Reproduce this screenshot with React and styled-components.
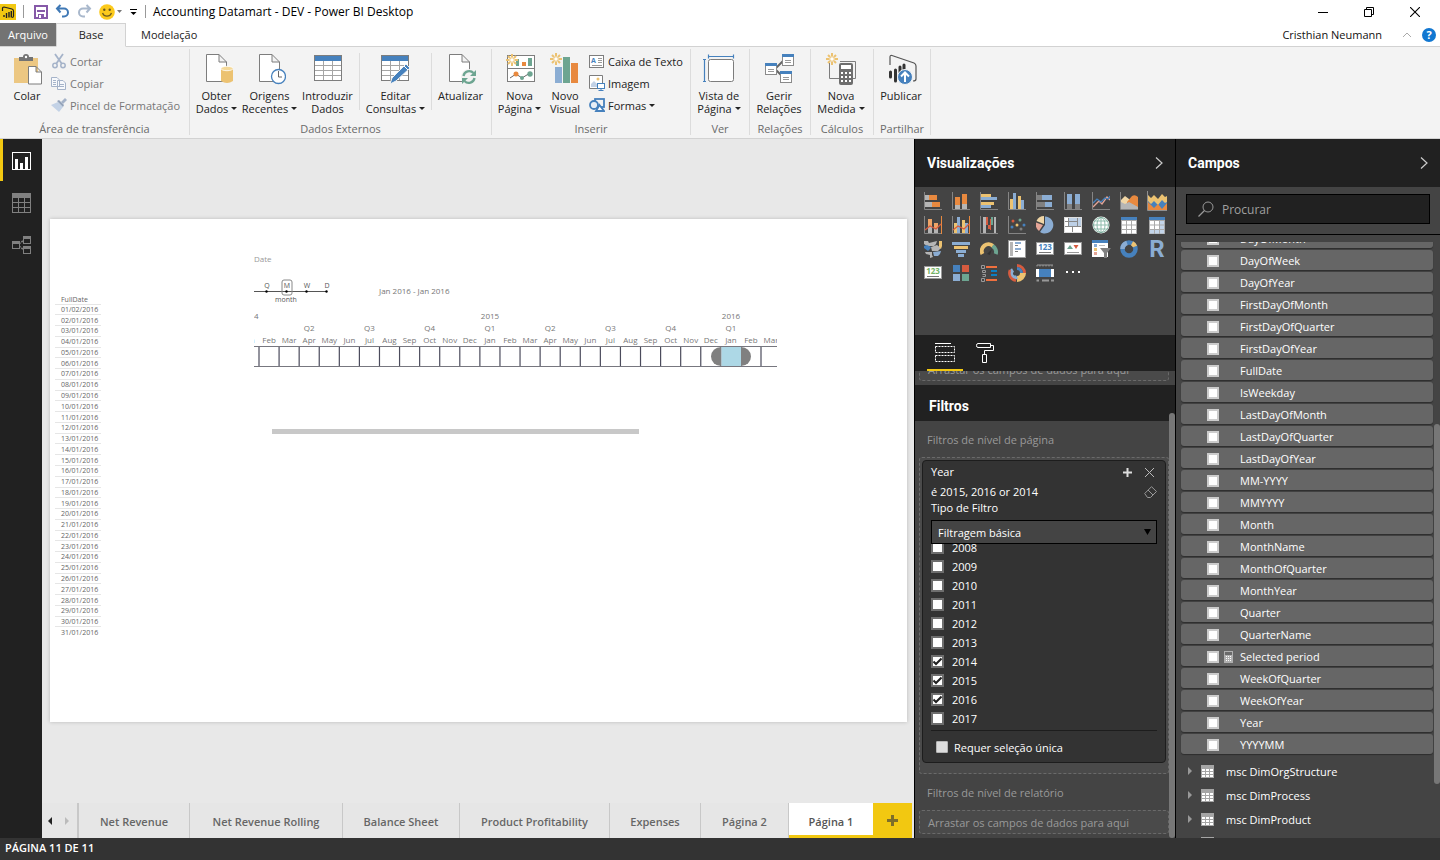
import React from "react";
import styled, { createGlobalStyle, css } from "styled-components";

const GlobalStyle = createGlobalStyle`
  *, *::before, *::after { box-sizing: border-box; }
  body { margin: 0; background: #fff; }
  body, button, input, select {
    font-family: "Open Sans", "Noto Sans", sans-serif;
    font-size: 11px;
  }
  button { border: 0; padding: 0; margin: 0; background: none; color: inherit; cursor: pointer; }
  svg { display: block; flex: none; }
`;

/* ---------- shell ---------- */

const Shell = styled.div`
  display: flex;
  flex-direction: column;
  height: 100vh;
  min-height: 600px;
  overflow: hidden;
`;

const Workspace = styled.div`
  flex: 1;
  min-height: 0;
  display: flex;
  background: #e8e8e8;
`;

const StatusBar = styled.footer`
  flex: none;
  height: 22px;
  padding: 0 5px;
  background: #333;
  color: #fff;
  font-weight: 600;
  line-height: 20px;
`;

/* ---------- title bar and tabs ---------- */

const TitleBar = styled.header`
  flex: none;
  height: 23px;
  display: flex;
  align-items: center;
  background: #fff;
`;

const QuickAccess = styled.div`
  display: flex;
  align-items: center;
  gap: 7px;
`;

const Rule = styled.span`
  width: 1px;
  height: 13px;
  margin-right: 3px;
  background: #999;
`;

const QuickButton = styled.button`
  display: flex;
  align-items: center;
  gap: 2px;
`;

const WindowTitle = styled.h1`
  margin: 0 0 0 4px;
  flex: 1;
  font-size: 12px;
  font-weight: 400;
  line-height: 23px;
  color: #000;
`;

const WindowButtons = styled.div`
  display: flex;
  padding-right: 2px;
  height: 20px;
`;

const WindowButton = styled.button`
  width: 46px;
  display: flex;
  align-items: center;
  justify-content: center;
`;

const TabRow = styled.nav`
  flex: none;
  height: 24px;
  display: flex;
  background: #fff;
  border-bottom: 1px solid #d2d2d2;
`;

const RibbonTab = styled.button`
  height: 24px;
  padding: 0 14px;
  color: #222;
  line-height: 22px;
  border: 1px solid transparent;
  ${(p) => p.$kind === "file" && css`
    width: 56px;
    height: 23px;
    padding: 0;
    background: #737373;
    color: #fff;
    border-color: #737373;
  `}
  ${(p) => p.$kind === "active" && css`
    width: 70px;
    padding: 0;
    background: #f3f3f3;
    border-color: #d2d2d2;
    border-bottom-color: #f3f3f3;
  `}
`;

const Account = styled.div`
  margin-left: auto;
  display: flex;
  align-items: center;
  padding-right: 4px;
  color: #111;
`;

const AccountName = styled.span`
  margin-right: 20px;
`;

const HelpButton = styled.button`
  width: 14px;
  height: 14px;
  margin-left: 10px;
  border-radius: 50%;
  background: #1177d1;
  color: #fff;
  font-weight: 700;
  line-height: 14px;
`;

/* ---------- ribbon ---------- */

const Ribbon = styled.div`
  flex: none;
  height: 92px;
  display: flex;
  padding: 2px 0 3px;
  background: #f3f3f3;
  border-bottom: 1px solid #d2d2d2;
`;

const Group = styled.section`
  display: flex;
  flex-direction: column;
  width: ${(p) => p.$width}px;
  border-right: 1px solid #dcdcdc;
`;

const GroupBody = styled.div`
  flex: 1;
  display: flex;
  justify-content: ${(p) => (p.$start ? "flex-start" : "center")};
  padding: ${(p) => (p.$start ? "4px 0 0 3px" : "4px 2px 0 0")};
`;

const GroupLabel = styled.h2`
  margin: 0;
  text-align: center;
  font-size: 11px;
  font-weight: 400;
  line-height: 13px;
  color: #6a6a6a;
`;

const BigButton = styled.button`
  flex: none;
  width: ${(p) => p.$width}px;
  display: flex;
  flex-direction: column;
  align-items: center;
  justify-content: flex-start;
  line-height: 13px;
  color: #222;
  white-space: nowrap;
  svg.icon { margin-bottom: 4px; }
`;

const LabelLine = styled.span`
  display: flex;
  align-items: center;
  gap: 3px;
`;

const InnerRule = styled.span`
  width: 1px;
  height: 57px;
  background: #dcdcdc;
`;

const SmallStack = styled.div`
  display: flex;
  flex-direction: column;
  padding-left: ${(p) => p.$indent || 0}px;
  margin-top: -3px;
`;

const SmallButton = styled.button`
  height: 22px;
  display: flex;
  align-items: center;
  gap: 3px;
  white-space: nowrap;
  color: ${(p) => (p.$dim ? "#777" : "#222")};
`;

/* ---------- view switcher and canvas ---------- */

const ViewBar = styled.nav`
  flex: none;
  width: 42px;
  background: #212121;
  display: flex;
  flex-direction: column;
`;

const ViewButton = styled.button`
  height: 42px;
  width: 42px;
  display: flex;
  align-items: center;
  justify-content: center;
  padding: 2px 2px 0 0;
  border-left: 3px solid ${(p) => (p.$active ? "#f2c811" : "transparent")};
`;

const Center = styled.main`
  flex: 1;
  min-width: 0;
  display: flex;
  flex-direction: column;
`;

const CanvasArea = styled.div`
  flex: 1;
  min-height: 0;
  display: flex;
  align-items: center;
  padding: 0 7px 2px 8px;
`;

const ReportPage = styled.div`
  position: relative;
  flex: 1;
  aspect-ratio: 857 / 503;
  background: #fff;
  box-shadow: 0 0 4px rgba(0, 0, 0, 0.2);
`;

const DateTable = styled.table`
  position: absolute;
  left: 5px;
  top: 76px;
  width: 46px;
  height: 343px;
  border-collapse: collapse;
  font-size: 7px;
  line-height: 9px;
  color: #666;
  th, td {
    padding: 0 0 0 6px;
    font-weight: 400;
    text-align: left;
    border-bottom: 1px solid #e6e6e6;
    white-space: nowrap;
  }
  tr:last-child td { border-bottom: 0; }
`;

const Timeline = styled.svg`
  position: absolute;
  left: 204px;
  top: 31px;
  font-family: "Open Sans", "Noto Sans", sans-serif;
  font-size: 8px;
`;

const PageTabs = styled.nav`
  flex: none;
  height: 35px;
  display: flex;
  background: #e6e6e6;
  overflow: hidden;
`;

const Pager = styled.div`
  width: 37px;
  display: flex;
  align-items: center;
  justify-content: center;
  gap: 13px;
  padding-right: 2px;
  border-right: 2px solid #c8c8c8;
`;

const PageTab = styled.button`
  flex: none;
  width: ${(p) => p.$width}px;
  padding-top: 2px;
  border-right: 1px solid #c8c8c8;
  color: #666;
  font-weight: 600;
  white-space: nowrap;
  ${(p) => p.$active && css`
    background: #fff;
    border-right: 0;
    border-bottom: 3px solid #f2c811;
    padding-top: 4px;
    color: #555;
  `}
`;

const AddPage = styled.button`
  width: 39px;
  display: flex;
  align-items: center;
  justify-content: center;
  background: #f2c811;
`;

/* ---------- side panels ---------- */

const Panel = styled.aside`
  position: relative;
  flex: none;
  width: ${(p) => p.$width}px;
  display: flex;
  flex-direction: column;
  background: #444;
  border-left: 1px solid #000;
  color: #fff;
  overflow: hidden;
`;

const PanelHeader = styled.div`
  flex: none;
  height: 48px;
  display: flex;
  align-items: center;
  justify-content: space-between;
  padding: 0 12px;
  background: #212121;
`;

const PanelTitle = styled.h2`
  margin: 0;
  font-family: Roboto, sans-serif;
  font-size: 14px;
  font-weight: 700;
  line-height: 36px;
`;

const VisualGrid = styled.div`
  flex: none;
  height: 148px;
  display: grid;
  grid-template-columns: repeat(9, 28px);
  grid-auto-rows: 24px;
  padding: 2px 0 0 4px;
`;

const VisualButton = styled.button`
  display: flex;
  align-items: center;
  justify-content: center;
`;

const PaneTabs = styled.div`
  flex: none;
  height: 36px;
  display: flex;
  gap: 4px;
  padding-left: 12px;
  background: #212121;
`;

const PaneTab = styled.button`
  width: 36px;
  display: flex;
  align-items: center;
  justify-content: center;
  padding-top: 2px;
  border-bottom: 2px solid ${(p) => (p.$active ? "#f2c811" : "transparent")};
`;

const ClippedWell = styled.div`
  flex: none;
  height: 14px;
  display: flex;
  align-items: flex-end;
  overflow: hidden;
  padding: 0 6px 4px 4px;
`;

const DropWell = styled.div`
  flex: 1;
  height: 24px;
  padding: 1px 0 0 8px;
  border: 1px dashed #6a6a6a;
  border-radius: 3px;
  background: #4a4a4a;
  color: #999;
  line-height: 22px;
  white-space: nowrap;
`;

const FilterHeader = styled.div`
  flex: none;
  height: 36px;
  padding: 3px 14px 0;
  background: #212121;
`;

const FilterBody = styled.div`
  flex: 1;
  min-height: 0;
  padding: 0 6px 0 4px;
  overflow: hidden;
`;

const Caption = styled.p`
  margin: 0;
  padding: 2px 0 0 8px;
  line-height: 34px;
  color: #999;
`;

const FilterWell = styled.div`
  height: 317px;
  padding: 2px;
  border: 1px dashed #6a6a6a;
  border-radius: 3px;
  background: #4a4a4a;
`;

const FilterCard = styled.div`
  height: 303px;
  padding: 3px 8px 0;
  border: 1px solid #1d1d1d;
  border-radius: 4px;
  background: #333;
`;

const CardRow = styled.div`
  display: flex;
  align-items: center;
  height: 16px;
  margin-bottom: ${(p) => p.$gap || 0}px;
  line-height: 16px;
`;

const CardActions = styled.span`
  margin-left: auto;
  display: flex;
  align-items: center;
  gap: 13px;
  padding-right: ${(p) => p.$end}px;
`;

const SelectWrap = styled.div`
  display: grid;
  align-items: center;
  margin-top: 4px;
  > * { grid-area: 1 / 1; }
  svg { justify-self: end; margin-right: 6px; pointer-events: none; }
`;

const Select = styled.select`
  appearance: none;
  width: 100%;
  height: 24px;
  padding: 1px 6px 0;
  border: 1px solid #000;
  border-radius: 0;
  background: #444;
  color: #fff;
`;

const YearList = styled.div`
  height: 187px;
  display: flex;
  flex-direction: column;
  justify-content: flex-end;
  overflow: hidden;
  padding-bottom: 2px;
  border-bottom: 1px solid #1d1d1d;
`;

const YearRow = styled.label`
  flex: none;
  height: 19px;
  display: flex;
  align-items: center;
  gap: 8px;
`;

const Check = styled.input`
  appearance: none;
  flex: none;
  width: ${(p) => p.$size}px;
  height: ${(p) => p.$size}px;
  margin: 0;
  border: 2px solid ${(p) => p.$edge};
  background: #fff;
  &:checked {
    background: #fff url("data:image/svg+xml,%3Csvg xmlns='http://www.w3.org/2000/svg' viewBox='0 0 9 9'%3E%3Cpath d='M0.5 4.5L3 7L8.500 1.500' fill='none' stroke='%23222' stroke-width='2'/%3E%3C/svg%3E") center / 9px 9px no-repeat;
  }
`;

const SingleRow = styled.label`
  height: 32px;
  display: flex;
  align-items: center;
  gap: 6px;
  padding-left: 5px;
`;

const SingleCheck = styled.input`
  appearance: none;
  width: 12px;
  height: 12px;
  margin: 0;
  border: 1px solid #b5b5b5;
  border-radius: 1px;
  background: #ddd;
`;

const ScrollThumb = styled.span`
  position: absolute;
  right: 0;
  top: ${(p) => p.$top}px;
  width: 6px;
  height: ${(p) => p.$height}px;
  border-radius: 3px;
  background: #777;
`;

const SearchArea = styled.div`
  flex: none;
  height: 48px;
  padding: 7px 10px 0;
  border-bottom: 1px solid #000;
`;

const SearchBox = styled.label`
  height: 30px;
  display: flex;
  align-items: center;
  gap: 8px;
  padding-left: 11px;
  border: 1px solid #000;
  background: #212121;
`;

const SearchInput = styled.input`
  flex: 1;
  min-width: 0;
  border: 0;
  padding: 0;
  outline: 0;
  background: transparent;
  color: #fff;
  font-size: 12px;
  &::placeholder { color: #a0a0a0; opacity: 1; }
`;

const FieldScroller = styled.div`
  flex: 1;
  min-height: 0;
  margin-top: 7px;
  overflow: hidden;
`;

const FieldList = styled.div`
  margin: -14px 7px 0 5px;
  padding-bottom: 3px;
`;

const FieldRow = styled.label`
  height: 20px;
  margin-bottom: 2px;
  display: flex;
  align-items: center;
  padding: 1px 0 0 26px;
  border-radius: 3px;
  background: #666;
  box-shadow: 0 1px 1px #2e2e2e;
`;

const FieldGlyph = styled.span`
  width: 21px;
  display: flex;
  padding-left: 5px;
`;

const TableRow = styled.button`
  width: 100%;
  height: 24px;
  display: flex;
  align-items: center;
  padding-left: 12px;
  text-align: left;
`;

const TableName = styled.span`
  margin-left: 12px;
`;

/* ---------- icons ---------- */

const C = { or: "#e8893f", gr: "#b5b5b5", dk: "#808080", ye: "#ecc271", bl: "#8badd3", db: "#4681bd", pk: "#e5a597", te: "#6da591", rd: "#d65b3f" };

const Rects = ({ items }) =>
  items.map(([x, y, w, h, f], i) => <rect key={i} x={x} y={y} width={w} height={h} fill={f} />);

const Caret = ({ w = 6, h = 3, fill = "#222" }) => (
  <svg width={w} height={h} viewBox={`0 0 ${w} ${h}`}><path d={`M0 0h${w}L${w / 2} ${h}z`} fill={fill} /></svg>
);

const Chevron = () => (
  <svg width="8" height="12" viewBox="0 0 8 12"><path d="M1 .5L7 6L1 11.500" fill="none" stroke="#ccc" strokeWidth="1.200" /></svg>
);

const Svg = ({ s = 18, children, ...rest }) => (
  <svg width={s} height={s} viewBox={`0 0 ${s} ${s}`} {...rest}>{children}</svg>
);

const Axis = () => <path d="M.5 0V17.5H18" fill="none" stroke="#858585" />;

const bars = (items) => <Svg><Rects items={items} /><Axis /></Svg>;

const wave = (y, f) => <path d={`M1 ${y}L4 ${y + 3}L7 ${y}L11 ${y + 4}L15 ${y - 1}L18 ${y + 2}L20 ${y + 1}V19H1z`} fill={f} />;

const VISUALS = [
  ["Barras empilhadas", bars([[1, 3, 4, 5, C.gr], [5, 3, 8, 5, C.or], [1, 10, 7, 5, C.gr], [8, 10, 8, 5, C.or]])],
  ["Colunas empilhadas", bars([[3, 5, 5, 8, C.or], [3, 13, 5, 4, C.gr], [10, 2, 5, 10, C.or], [10, 12, 5, 5, C.gr]])],
  ["Barras agrupadas", bars([[1, 2, 10, 3, C.ye], [1, 5, 16, 3, C.bl], [1, 10, 13, 3, C.ye], [1, 13, 10, 3, C.bl]])],
  ["Colunas agrupadas", bars([[2, 7, 3, 10, C.ye], [5, 1, 3, 16, C.bl], [10, 4, 3, 13, C.ye], [13, 8, 3, 9, C.bl]])],
  ["Barras 100%", bars([[1, 3, 5, 5, C.dk], [6, 3, 10, 5, C.bl], [1, 10, 8, 5, C.dk], [9, 10, 7, 5, C.bl]])],
  ["Colunas 100%", bars([[3, 2, 5, 10, C.bl], [3, 12, 5, 5, C.dk], [11, 2, 5, 10, C.bl], [11, 12, 5, 5, C.dk]])],
  ["Linhas", <Svg><path d="M1 15L7 9L10 12L15 5L18 8" fill="none" stroke={C.pk} strokeWidth="1.300" /><path d="M1 11L5 7L9 10L13 6L16 7L18 4" fill="none" stroke={C.db} strokeWidth="1.300" /><Axis /></Svg>],
  ["Área", <Svg><path d="M1 17V8L5 4L9 7L12 9V17z" fill="#f0d6a6" /><path d="M7 10L12 4Q15 2 18 5V17H7z" fill={C.or} /><path d="M1 10L5 12L9 10L18 15V17H1z" fill={C.gr} /><Axis /></Svg>],
  ["Área empilhada", <Svg s={20}>{wave(4, C.ye)}{wave(10, C.db)}<path d="M1 11L4 14L7 17L11 13L15 18L20 12V19H1z" fill={C.or} /><path d="M.5 0V19.5H20" fill="none" stroke="#909090" /></Svg>],
  ["Linhas e colunas empilhadas", <Svg><Rects items={[[4, 3, 4, 8, "#eea467"], [4, 11, 4, 6, C.gr], [10, 7, 4, 5, "#eea467"], [10, 12, 4, 5, C.gr], [17, 0, 1, 18, C.or]]} /><path d="M1 14L6 10L12 13L17 8" fill="none" stroke={C.rd} strokeWidth="1.300" /><path d="M.5 0V17.5H17" fill="none" stroke="#858585" /></Svg>],
  ["Linhas e colunas agrupadas", <Svg><Rects items={[[2, 7, 3, 10, C.ye], [5, 1, 3, 16, C.bl], [10, 4, 3, 13, C.ye], [13, 7, 3, 10, C.bl], [17, 0, 1, 18, C.or]]} /><path d="M1 14L6 10L12 13L17 8" fill="none" stroke={C.rd} strokeWidth="1.300" /><path d="M.5 0V17.500H17" fill="none" stroke="#858585" /></Svg>],
  ["Cascata", bars([[3, 1, 3, 16, C.gr], [6, 1, 2, 8, C.rd], [8, 9, 2, 4, C.rd], [10, 3, 1, 11, C.rd], [11, 1, 2, 8, C.te], [14, 1, 2, 16, C.gr]])],
  ["Dispersão", <Svg><circle cx="5" cy="5" r="1.500" fill={C.rd} /><circle cx="12" cy="4" r="1.500" fill={C.te} /><circle cx="9" cy="9" r="1.500" fill={C.ye} /><circle cx="4" cy="11" r="1.500" fill={C.db} /><circle cx="16" cy="9" r="1.500" fill={C.db} /><circle cx="13" cy="13" r="1.500" fill={C.dk} /><Axis /></Svg>],
  ["Circular", <Svg><path d="M9 9V.5A8.500 8.500 0 1 1 4 16z" fill={C.bl} /><path d="M8 8V0A8.500 8.500 0 0 0 .5 5z" fill="#f0d6a6" /><path d="M7 9L0 6.500A8.500 8.500 0 0 0 3 15z" fill={C.pk} /></Svg>],
  ["Treemap", <Svg><Rects items={[[0, 1, 18, 16, "#fff"], [5, 2, 8, 8, "#bdd0e6"], [14, 2, 3, 8, "#bdd0e6"], [4, 1, 1, 10, "#888"], [13, 1, 1, 9, "#888"], [0, 5, 13, 1, "#888"], [0, 10, 18, 1, "#888"], [8, 10, 1, 7, "#888"]]} /><rect x=".5" y="1.500" width="17" height="15" fill="none" stroke="#ddd" /></Svg>],
  ["Mapa", <Svg><circle cx="9" cy="9" r="8.500" fill="#fff" /><path d="M9 1V17M1 9H17M2.500 5H15.500M2.500 13H15.500" stroke="#8fbcad" fill="none" /><ellipse cx="9" cy="9" rx="4" ry="7.500" fill="none" stroke="#8fbcad" /><circle cx="9" cy="9" r="7.500" fill="none" stroke={C.te} strokeWidth=".8" /></Svg>],
  ["Tabela", <Svg><rect x="1" y="1" width="16" height="17" fill="#aaa" /><rect x="1" y="1" width="16" height="3" fill={C.db} /><Rects items={[5, 9.5, 14].flatMap((y) => [2, 7, 12].map((x) => [x, y, 4, 3.5, "#fff"]))} /></Svg>],
  ["Matriz", <Svg><rect x="1" y="1" width="16" height="17" fill="#aaa" /><rect x="1" y="1" width="16" height="3" fill={C.db} /><Rects items={[5, 9.5, 14].flatMap((y) => [2, 7, 12].map((x) => [x, y, 4, 3.5, x === 12 || y === 14 ? "#c3d5ea" : "#fff"]))} /></Svg>],
  ["Mapa de manchas", <Svg><path d="M0 1H4L5 3L9 2L13 1L12 4L10 6H3L0 4z" fill={C.gr} /><path d="M0 6L3 5L7 7L6 9L4 11L0 8z" fill={C.db} /><path d="M7 7L13 5L17 8L14 11H8z" fill={C.gr} /><path d="M15 1H18V6L17 9L15 7z" fill={C.ye} /><path d="M9 12L17 11L16 14L14 16H10z" fill={C.bl} /><path d="M1 12H8V15L9 17L6 18V15L2 14z" fill={C.gr} /></Svg>],
  ["Funil", <Svg><Rects items={[[0, 2, 18, 3, C.bl], [2, 6, 14, 3, C.ye], [4, 10, 10, 3, C.bl], [6, 14, 6, 3, C.bl]]} /></Svg>],
  ["Medidor", <Svg><path d="M2.500 14A6.700 6.700 0 0 1 13 6" fill="none" stroke={C.ye} strokeWidth="4" /><path d="M12.500 6A6.700 6.700 0 0 1 15.700 14" fill="none" stroke={C.te} strokeWidth="4" /><path d="M7 14L12 9L10 15z" fill="#333" /></Svg>],
  ["Cartão de várias linhas", <Svg><rect x=".5" y=".5" width="17" height="17" fill="#fff" stroke="#999" /><Rects items={[[2, 2, 3, 14, C.gr], [7, 2, 6, 2, C.bl], [7, 5, 3, 1, C.dk], [7, 8, 6, 2, C.bl], [7, 11, 3, 1, C.dk]]} /></Svg>],
  ["Cartão", <Svg><rect x=".5" y="2.500" width="17" height="12" fill="#fff" stroke="#999" /><text x="9" y="10" textAnchor="middle" fontSize="8" fontWeight="700" fill={C.db}>123</text><rect x="3" y="12" width="12" height="1" fill="#777" /></Svg>],
  ["KPI", <Svg><rect x=".5" y="2.500" width="17" height="12" fill="#fff" stroke="#999" /><path d="M3 9L6 5L9 9z" fill={C.te} /><path d="M9.500 5H14.500L12 9z" fill={C.rd} /><rect x="3" y="12" width="12" height="1" fill="#999" /></Svg>],
  ["Segmentação", <Svg s={20}><Rects items={[[1, 1, 16, 17, "#fff"], [1, 1, 16, 3, C.db], [3, 5, 3, 3, C.bl], [3, 9, 3, 3, C.ye], [3, 13, 3, 3, C.pk], [8, 6, 6, 1, "#bbb"]]} /><path d="M9 9H20L16 14V19H13V14z" fill="#808080" /></Svg>],
  ["Anel", <Svg><circle cx="9" cy="9" r="6.500" fill="none" stroke={C.db} strokeWidth="4.500" /><path d="M12 3.200A6.500 6.500 0 0 1 15 6.500" fill="none" stroke={C.ye} strokeWidth="4.500" /><path d="M2.500 9A6.500 6.500 0 0 1 7 3" fill="none" stroke={C.bl} strokeWidth="4.500" /></Svg>],
  ["Script R", <Svg><text x="9" y="17" textAnchor="middle" fontFamily="Roboto" fontSize="24" fontWeight="700" fill={C.bl}>R</text></Svg>],
  ["Cartão personalizado", <Svg><rect x=".5" y="2.500" width="17" height="12" fill="#fff" stroke="#999" /><text x="9" y="10" textAnchor="middle" fontSize="8" fontWeight="700" fill="#74b266">123</text><rect x="3" y="12" width="12" height="1" fill="#777" /></Svg>],
  ["Mosaico", <Svg><Rects items={[[1, 1, 7, 7, C.db], [10, 1, 7, 7, C.rd], [1, 10, 7, 7, C.bl], [10, 10, 7, 7, C.te]]} /></Svg>],
  ["Segmentação hierárquica", <Svg><path d="M1.500 1.500h3v3h-3zM2.500 6.500h3v2h-3zM2.500 10.500h3v2h-3M1.500 14.500h3v3h-3z" fill="none" stroke="#999" /><Rects items={[[6, 2, 11, 2, "#f0703e"], [11, 6, 6, 2, "#0d7fc2"], [11, 10, 6, 2, "#0d7fc2"], [6, 15, 11, 2, "#f0703e"]]} /></Svg>],
  ["Radial", <Svg><path d="M9 1.500A7.500 7.500 0 0 1 16.500 9" fill="none" stroke={C.rd} strokeWidth="3" /><path d="M9 4.500A4.500 4.500 0 0 1 13.500 9" fill="none" stroke={C.db} strokeWidth="3" /><path d="M15 9A6 6 0 0 1 9 15" fill="none" stroke={C.ye} strokeWidth="6" /><path d="M9 13A4 4 0 0 1 5 6" fill="none" stroke={C.bl} strokeWidth="4" /><path d="M8 16.500A7.500 7.500 0 0 1 2 6" fill="none" stroke={C.rd} strokeWidth="2.500" /></Svg>],
  ["Linha cronológica", <Svg><path d="M1 1V2.500M4 1V2.500M7 1V2.500M10 1V2.500M13 1V2.500M16 1V2.500M1 1H17" stroke="#999" /><path d="M.5 16.500H3M6 16.500H13M15 16.500H18" stroke="#999" strokeWidth="2" /><Rects items={[[0, 5, 18, 8, "#fff"], [3, 5, 12, 8, C.db]]} /></Svg>],
  ["Mais opções", <Svg><Rects items={[[2, 7, 2, 2, "#fff"], [8, 7, 2, 2, "#fff"], [14, 7, 2, 2, "#fff"]]} /></Svg>],
];

const Doc = () => <path d="M5.500 1.500H18L25.500 9V28.500H5.500zM18 1.500V9H25.500" fill="#fff" stroke="#7d7d7d" />;

const GridPaper = ({ x = 2 }) => (
  <g>
    <rect x={x + 0.5} y="2.500" width="27" height="25" fill="#fff" stroke="#7d7d7d" />
    <rect x={x + 1} y="3" width="26" height="5" fill="#4681bd" />
    <path d={`M${x + 9.5} 8V27M${x + 18.5} 8V27M${x + 1} 12.500H${x + 27}M${x + 1} 17.500H${x + 27}M${x + 1} 22.500H${x + 27}`} stroke="#a5a5a5" fill="none" />
  </g>
);

const Spark = ({ x, y }) => (
  <g transform={`translate(${x} ${y})`} stroke="#ecc271" fill="none">
    <path d="M0-6V-3M0 3V6M-6 0H-3M3 0H6M-4-4L-2-2M2 2L4 4M4-4L2-2M-2 2L-4 4" strokeWidth="2" />
    <circle r="2.300" fill="#fff" />
  </g>
);

const Big = ({ children }) => <svg className="icon" width="32" height="32" viewBox="0 0 32 32">{children}</svg>;

const PasteIcon = () => (
  <Big>
    <rect x="3" y="5" width="24" height="25" fill="#ecc782" />
    <path d="M8 8V4H12A3 3 0 0 1 18 4H22V8z" fill="#737373" /><circle cx="15" cy="4" r="1.200" fill="#fff" />
    <path d="M17.500 13.500H25L30.500 19V31H17.500zM25 13.500V19H30.500" fill="#fff" stroke="#7d7d7d" />
  </Big>
);
const GetDataIcon = () => (
  <Big><Doc /><path d="M20 15V28Q26 32 32 28V15z" fill="#ecc271" /><ellipse cx="26" cy="15.500" rx="6" ry="2.200" fill="#f5d998" stroke="#fff" strokeWidth=".8" /></Big>
);
const RecentIcon = () => (
  <Big><Doc /><circle cx="24.500" cy="23.500" r="7" fill="#fff" stroke="#4681bd" strokeWidth="1.300" /><path d="M24.500 18V24H28" fill="none" stroke="#666" /></Big>
);
const EnterIcon = () => <Big><GridPaper /></Big>;
const EditIcon = () => (
  <Big><GridPaper x={1} /><path d="M10 31L12 25L26 11L30 15L16 28z" fill="#4681bd" stroke="#f3f3f3" /><path d="M24 13L28 17" stroke="#fff" /></Big>
);
const RefreshIcon = () => (
  <Big>
    <path d="M4.500 1.500H17L24.500 9V28.500H4.500zM17 1.500V9H24.500" fill="#fff" stroke="#7d7d7d" />
    <circle cx="24" cy="24" r="8" fill="#f3f3f3" />
    <path d="M18.500 23A5.800 5.800 0 0 1 28.500 20M29.500 25A5.800 5.800 0 0 1 19.500 28" fill="none" stroke="#6da591" strokeWidth="2.300" />
    <path d="M31 17V23H25zM17 31V25H23z" fill="#6da591" />
  </Big>
);
const NewPageIcon = () => (
  <Big>
    <rect x="3.500" y="2.500" width="27" height="26" fill="#fff" stroke="#7d7d7d" /><path d="M4 15.500H30" stroke="#7d7d7d" />
    <Rects items={[[12, 6, 3, 7, "#6da591"], [18, 9, 4, 4, "#e8893f"], [24, 5, 4, 8, "#6da591"]]} />
    <path d="M6 25L12 21L18 25L26 20" fill="none" stroke="#666" /><circle cx="12" cy="21" r="2.500" fill="#e8893f" /><circle cx="18" cy="25" r="2" fill="#6da591" /><circle cx="26" cy="21" r="2.700" fill="#6da591" />
    <Spark x={8} y={7} />
  </Big>
);
const NewVisualIcon = () => (
  <Big><Rects items={[[6, 14, 7, 16, "#8badd3"], [14, 4, 7, 26, "#6da591"], [22, 10, 7, 20, "#e8893f"]]} /><Spark x={7} y={6} /></Big>
);
const PageViewIcon = () => (
  <Big><rect x="5.500" y="6.500" width="25" height="22" rx="2" fill="#fff" stroke="#7d7d7d" /><path d="M5 3.500H31M5.500 1.500V5.500M30.500 1.500V5.500M1.500 6V29M0 6.500H3M0 28.500H3" fill="none" stroke="#4681bd" strokeWidth="1.200" /></Big>
);
const MiniCard = ({ x, y, w = 11 }) => (
  <g><rect x={x + 0.5} y={y + 0.5} width={w} height="11" fill="#fff" stroke="#8a8a8a" /><rect x={x} y={y} width={w + 1} height="3" fill="#4681bd" /><path d={`M${x + 3} ${y + 6.5}h6M${x + 3} ${y + 8.5}h6`} stroke="#999" /></g>
);
const RelationsIcon = () => (
  <Big><path d="M12 16L20 8M12 16L20 24" stroke="#666" strokeWidth="2" /><MiniCard x={2} y={10} /><MiniCard x={19} y={1} /><MiniCard x={17} y={18} /></Big>
);
const MeasureIcon = () => (
  <Big>
    <path d="M4.500 10V25.500H14M15 8.500H30.500V25.500H28" fill="none" stroke="#7d7d7d" />
    <rect x="14" y="10" width="14" height="22" rx="2" fill="#6e6e6e" /><rect x="16" y="12" width="10" height="4" fill="#fff" />
    <Rects items={[19, 23, 27].flatMap((y) => [16, 20, 24].map((x) => [x, y, 2, 2, "#fff"]))} />
    <Spark x={7} y={6} />
  </Big>
);
const PublishIcon = () => (
  <Big>
    <path d="M5 10V4Q5 2 7 2.500L29 10Q31 11 31 13V26Q31 28 28 28M5 10V12" fill="none" stroke="#555" strokeWidth="1.200" />
    <path d="M5.500 19V24M10.500 17V28M15 14V22M19 12V18" stroke="#333" strokeWidth="3" strokeLinecap="round" />
    <circle cx="20" cy="24" r="7.500" fill="#4681bd" stroke="#f3f3f3" /><path d="M20 29V20M16 23.500L20 19.500L24 23.500" fill="none" stroke="#fff" strokeWidth="2" />
  </Big>
);

const CutIcon = () => (
  <Svg s={16}><path d="M4 1L11 11M12 1L5 11" stroke="#a5b3c9" strokeWidth="1.800" /><circle cx="4" cy="12.500" r="2.200" fill="none" stroke="#a5b3c9" strokeWidth="1.500" /><circle cx="12" cy="12.500" r="2.200" fill="none" stroke="#a5b3c9" strokeWidth="1.500" /></Svg>
);
const CopyIcon = () => (
  <Svg s={16}><path d="M.5 2.500H6L8.500 5V11.500H.5zM6.500 5.500H12L14.500 8V14.500H6.500z" fill="#f7f9fc" stroke="#a5b3c9" /><path d="M2 5.500H5M2 7.500H5M2 9.500H5M8 9.500H13M8 11.500H13" stroke="#a5b3c9" /></Svg>
);
const BrushIcon = () => (
  <Svg s={16}><path d="M0 8L7 5L12 10L8 15z" fill="#c3d2e6" /><path d="M6 4L8 3L13 8L12 10z" fill="#94a3ba" /><path d="M10 5L14 1L16 3L12 7z" fill="#a5b3c9" /></Svg>
);
const TextBoxIcon = () => (
  <Svg s={16}><rect x=".5" y="2.500" width="14" height="12" fill="#fff" stroke="#7d7d7d" /><text x="2" y="10" fontSize="7" fontWeight="700" fill="#4681bd">A</text><path d="M9 5.500H13M9 7.500H13M9 9.500H13M3 12.500H13" stroke="#999" /></Svg>
);
const ImageIcon = () => (
  <Svg s={16}><path d="M.5.500H13.500V13.500H.5z" fill="#fff" stroke="#7d7d7d" /><circle cx="9" cy="4" r="1.500" fill="#ecc271" /><path d="M2 12V9L5 6L8 9V12z" fill="#c3d2e6" /><rect x="8.500" y="8.500" width="7" height="5" fill="#fff" stroke="#4681bd" /><path d="M12 13V15M9.500 15.500H14.500" stroke="#4681bd" /></Svg>
);
const ShapesIcon = () => (
  <Svg s={16}><rect x="6" y="2" width="9" height="8" fill="none" stroke="#4681bd" strokeWidth="1.800" /><circle cx="5" cy="8" r="4" fill="#e7eef6" stroke="#4681bd" strokeWidth="1.800" /><path d="M10.500 8L15 14H7z" fill="#fff" stroke="#4681bd" strokeWidth="1.800" /></Svg>
);

const LogoIcon = () => (
  <Svg s={16}><rect width="16" height="16" fill="#f2c811" /><path d="M2.500 7V4Q2.500 3 4 3L12 5Q13.500 5.500 13.500 7V12Q13.500 13.500 12 13.500" fill="none" stroke="#222" strokeWidth="1.200" /><path d="M4 11V13M6.500 9V14M9 8V13.500M11.300 7V13.500" stroke="#222" strokeWidth="1.400" /></Svg>
);
const SaveIcon = () => (
  <Svg s={14}><path d="M1 1H13V13H1z" fill="#fff" stroke="#8659a8" strokeWidth="2" /><path d="M3 6H11" stroke="#8659a8" strokeWidth="2" /><path d="M4 9H10V13H4z" fill="#8659a8" /><rect x="5" y="10" width="2" height="3" fill="#fff" /></Svg>
);
const ArrowIcon = ({ flip, color }) => (
  <Svg s={15}><path transform={flip ? "matrix(-1 0 0 1 15 0)" : undefined} d="M5.500 1L2 4.500L5.500 8.500M2 4.500H9A4 4 0 0 1 9 12.500H7" fill="none" stroke={color} strokeWidth="2" /></Svg>
);
const SmileIcon = () => (
  <Svg s={16}><circle cx="8" cy="8" r="7.800" fill="#fcca1c" /><circle cx="5.300" cy="5.800" r="1.200" fill="#6b5a1e" /><circle cx="10.700" cy="5.800" r="1.200" fill="#6b5a1e" /><path d="M3.500 9A4.800 4.800 0 0 0 12.500 9" fill="none" stroke="#6b5a1e" strokeWidth="1.200" /></Svg>
);

const ReportIcon = () => (
  <svg width="19" height="18" viewBox="0 0 19 18"><rect x=".5" y=".5" width="18" height="17" fill="none" stroke="#fff" /><Rects items={[[3, 7, 3, 10, "#fff"], [8, 11, 3, 6, "#fff"], [13, 5, 3, 12, "#fff"]]} /></svg>
);
const DataIcon = () => (
  <svg width="19" height="20" viewBox="0 0 19 20"><rect width="19" height="20" fill="#808080" /><Rects items={[5, 10, 15].flatMap((y) => [1, 7, 13].map((x) => [x, y, 5, 4, "#212121"]))} /></svg>
);
const ModelIcon = () => (
  <svg width="19" height="18" viewBox="0 0 19 18"><path d="M7 8L12 4M7 10L12 14" stroke="#808080" strokeWidth="1.500" strokeDasharray="2 1" /><g fill="#212121" stroke="#808080"><rect x=".5" y="5.500" width="7" height="7" /><rect x="11.500" y=".5" width="7" height="7" /><rect x="11.500" y="10.500" width="7" height="7" /></g><Rects items={[[0, 5, 8, 3, "#808080"], [11, 0, 8, 3, "#808080"], [11, 10, 8, 3, "#808080"]]} /></svg>
);

const FieldsTabIcon = () => (
  <Svg s={20}><path d="M0 .5H16" stroke="#fff" /><path d="M.5 3.500H19.500V9.500H.5zM.5 12.500H19.500V18.500H.5z" fill="none" stroke="#fff" strokeDasharray="2 1" /></Svg>
);
const RollerIcon = () => (
  <Svg s={20}><path d="M3 .5H15.500V4.500H3Q1.500 4.500 1.500 2.500Q1.500 .500 3 .500zM15.500 2.500H18.500V7.500H9.500V11M7.500 11.500H11.500V19.500H7.500z" fill="none" stroke="#fff" /></Svg>
);
const TableGlyph = () => (
  <Svg s={13}><rect width="13" height="13" fill="#a5a5a5" /><Rects items={[4, 7, 10].flatMap((y) => [1, 5, 9].map((x) => [x, y, 3, 2, "#fff"]))} /></Svg>
);
const CalcGlyph = () => (
  <svg width="9" height="12" viewBox="0 0 9 12"><rect width="9" height="12" fill="#b0b0b0" /><rect x="1" y="1" width="7" height="3" fill="#6a6a6a" /><Rects items={[5, 7, 9].flatMap((y) => [2, 4, 6].map((x) => [x, y, 1, 1, "#fff"]))} /></svg>
);

/* ---------- data ---------- */

const DATES = ["01/02/2016", ...Array.from({ length: 30 }, (_, i) => `${String(i + 2).padStart(2, "0")}/01/2016`)];
const MONTHS = ["Jan", "Feb", "Mar", "Apr", "May", "Jun", "Jul", "Aug", "Sep", "Oct", "Nov", "Dec"];
const FIELDS = ["DayOfMonth", "DayOfWeek", "DayOfYear", "FirstDayOfMonth", "FirstDayOfQuarter", "FirstDayOfYear", "FullDate", "IsWeekday", "LastDayOfMonth", "LastDayOfQuarter", "LastDayOfYear", "MM-YYYY", "MMYYYY", "Month", "MonthName", "MonthOfQuarter", "MonthYear", "Quarter", "QuarterName", "Selected period", "WeekOfQuarter", "WeekOfYear", "Year", "YYYYMM"];
const TABLES = ["msc DimOrgStructure", "msc DimProcess", "msc DimProduct", "msc DimProject"];
const PAGES = [["Net Revenue", 111], ["Net Revenue Rolling", 153], ["Balance Sheet", 117], ["Product Profitability", 150], ["Expenses", 91], ["Página 2", 88], ["Página 1", 84]];
const YEARS = [2008, 2009, 2010, 2011, 2012, 2013, 2014, 2015, 2016, 2017];

/* ---------- composed parts ---------- */

const Action = ({ width, icon, lines, caret }) => (
  <BigButton $width={width}>
    {icon}
    {lines.map((line, i) => (
      <LabelLine key={line}>{line}{caret && i === lines.length - 1 && <Caret />}</LabelLine>
    ))}
  </BigButton>
);

const STEP = 20.08;

const TimelineVisual = () => {
  const first = 5 - STEP;
  const months = Array.from({ length: 27 }, (_, i) => ({ x: first + i * STEP, m: i % 12 }));
  return (
    <Timeline width="523" height="190" viewBox="0 0 523 190" fill="#777">
      <text x="0" y="12" fill="#999">Date</text>
      <path d="M0 41.500H73" stroke="#555" />
      {["Q", "M", "W", "D"].map((t, i) => (
        <g key={t}>
          <text x={13 + i * 20} y="38" fontSize="7" textAnchor="middle" fill="#555">{t}</text>
          <circle cx={12.500 + i * 20} cy="41.500" r="1.200" fill="#000" />
        </g>
      ))}
      <rect x="28" y="30" width="10" height="15" rx="2" fill="none" stroke="#888" />
      <text x="32" y="52" fontSize="7" textAnchor="middle" fill="#555">month</text>
      <text x="125" y="44">Jan 2016 - Jan 2016</text>
      <text x="0" y="69">4</text>
      <text x="236" y="69" textAnchor="middle">2015</text>
      <text x="477" y="69" textAnchor="middle">2016</text>
      {months.map(({ x, m }, i) => (
        <g key={i}>
          {m % 3 === 0 && i > 0 && <text x={x + STEP / 2} y="81" textAnchor="middle">{`Q${m / 3 + 1}`}</text>}
          <text x={x + STEP / 2} y="93" textAnchor="middle">{MONTHS[m]}</text>
          <path d={`M${x} 96.500V116.500`} stroke="#4b4b5c" strokeWidth="1.200" />
        </g>
      ))}
      <path d="M0 96.500H523M0 116.500H523" stroke="#77777f" />
      <path d="M467 97A10 9.500 0 0 0 467 116z" fill="#808080" />
      <path d="M487 97A10 9.500 0 0 1 487 116z" fill="#808080" />
      <rect x="467.500" y="97" width="19.500" height="19" fill="#add8e6" />
      <rect x="18" y="179" width="367" height="5" fill="#c8c8c8" />
    </Timeline>
  );
};

export default function App() {
  return (
    <Shell>
      <GlobalStyle />
      <TitleBar>
        <QuickAccess>
          <LogoIcon />
          <Rule />
          <QuickButton aria-label="Guardar"><SaveIcon /></QuickButton>
          <QuickButton aria-label="Anular"><ArrowIcon color="#3f78b5" /></QuickButton>
          <QuickButton aria-label="Refazer"><ArrowIcon flip color="#a9b8cc" /></QuickButton>
          <QuickButton aria-label="Enviar comentário"><SmileIcon /><Caret w={5} h={3} fill="#777" /></QuickButton>
          <QuickButton aria-label="Personalizar">
            <svg width="9" height="8" viewBox="0 0 9 8"><path d="M1 1.500H8" stroke="#000" /><path d="M1.500 4H7.500L4.500 7z" fill="#000" /></svg>
          </QuickButton>
          <Rule />
        </QuickAccess>
        <WindowTitle>Accounting Datamart - DEV - Power BI Desktop</WindowTitle>
        <WindowButtons>
          <WindowButton aria-label="Minimizar"><svg width="10" height="10" viewBox="0 0 10 10"><path d="M0 5.500H10" stroke="#000" /></svg></WindowButton>
          <WindowButton aria-label="Restaurar"><svg width="10" height="10" viewBox="0 0 10 10"><path d="M.5 2.500H7.500V9.500H.5zM2.500 2V.5H9.500V7.500H8" fill="none" stroke="#000" /></svg></WindowButton>
          <WindowButton aria-label="Fechar"><svg width="10" height="10" viewBox="0 0 10 10"><path d="M0 0L10 10M10 0L0 10" stroke="#000" strokeWidth="1.100" /></svg></WindowButton>
        </WindowButtons>
      </TitleBar>

      <TabRow>
        <RibbonTab $kind="file">Arquivo</RibbonTab>
        <RibbonTab $kind="active">Base</RibbonTab>
        <RibbonTab>Modelação</RibbonTab>
        <Account>
          <AccountName>Cristhian Neumann</AccountName>
          <svg width="10" height="6" viewBox="0 0 10 6"><path d="M1 5L5 1L9 5" fill="none" stroke="#aaa" /></svg>
          <HelpButton aria-label="Ajuda">?</HelpButton>
        </Account>
      </TabRow>

      <Ribbon>
        <Group $width={190}>
          <GroupBody $start>
            <Action width={48} icon={<PasteIcon />} lines={["Colar"]} />
            <SmallStack>
              <SmallButton $dim><CutIcon />Cortar</SmallButton>
              <SmallButton $dim><CopyIcon />Copiar</SmallButton>
              <SmallButton $dim><BrushIcon />Pincel de Formatação</SmallButton>
            </SmallStack>
          </GroupBody>
          <GroupLabel>Área de transferência</GroupLabel>
        </Group>
        <Group $width={302}>
          <GroupBody>
            <Action width={53} icon={<GetDataIcon />} lines={["Obter", "Dados"]} caret />
            <Action width={53} icon={<RecentIcon />} lines={["Origens", "Recentes"]} caret />
            <Action width={63} icon={<EnterIcon />} lines={["Introduzir", "Dados"]} />
            <InnerRule />
            <Action width={71} icon={<EditIcon />} lines={["Editar", "Consultas"]} caret />
            <InnerRule />
            <Action width={57} icon={<RefreshIcon />} lines={["Atualizar"]} />
          </GroupBody>
          <GroupLabel>Dados Externos</GroupLabel>
        </Group>
        <Group $width={199}>
          <GroupBody $start>
            <Action width={49} icon={<NewPageIcon />} lines={["Nova", "Página"]} caret />
            <Action width={42} icon={<NewVisualIcon />} lines={["Novo", "Visual"]} />
            <SmallStack $indent={3}>
              <SmallButton><TextBoxIcon />Caixa de Texto</SmallButton>
              <SmallButton><ImageIcon />Imagem</SmallButton>
              <SmallButton><ShapesIcon />Formas<Caret /></SmallButton>
            </SmallStack>
          </GroupBody>
          <GroupLabel>Inserir</GroupLabel>
        </Group>
        <Group $width={59}>
          <GroupBody><Action width={56} icon={<PageViewIcon />} lines={["Vista de", "Página"]} caret /></GroupBody>
          <GroupLabel>Ver</GroupLabel>
        </Group>
        <Group $width={61}>
          <GroupBody><Action width={56} icon={<RelationsIcon />} lines={["Gerir", "Relações"]} /></GroupBody>
          <GroupLabel>Relações</GroupLabel>
        </Group>
        <Group $width={63}>
          <GroupBody><Action width={56} icon={<MeasureIcon />} lines={["Nova", "Medida"]} caret /></GroupBody>
          <GroupLabel>Cálculos</GroupLabel>
        </Group>
        <Group $width={57}>
          <GroupBody><Action width={56} icon={<PublishIcon />} lines={["Publicar"]} /></GroupBody>
          <GroupLabel>Partilhar</GroupLabel>
        </Group>
      </Ribbon>

      <Workspace>
        <ViewBar>
          <ViewButton $active aria-label="Relatório"><ReportIcon /></ViewButton>
          <ViewButton aria-label="Dados"><DataIcon /></ViewButton>
          <ViewButton aria-label="Relações"><ModelIcon /></ViewButton>
        </ViewBar>

        <Center>
          <CanvasArea>
            <ReportPage>
              <DateTable>
                <thead><tr><th scope="col">FullDate</th></tr></thead>
                <tbody>{DATES.map((d) => <tr key={d}><td>{d}</td></tr>)}</tbody>
              </DateTable>
              <TimelineVisual />
            </ReportPage>
          </CanvasArea>
          <PageTabs>
            <Pager>
              <svg width="4" height="8" viewBox="0 0 4 8"><path d="M4 0V8L0 4z" fill="#222" /></svg>
              <svg width="4" height="8" viewBox="0 0 4 8"><path d="M0 0V8L4 4z" fill="#bbb" /></svg>
            </Pager>
            {PAGES.map(([name, width]) => (
              <PageTab key={name} $width={width} $active={name === "Página 1"}>{name}</PageTab>
            ))}
            <AddPage aria-label="Nova página"><svg width="11" height="11" viewBox="0 0 11 11"><path d="M5.500 0V11M0 5.500H11" stroke="#7d6e2a" strokeWidth="3" /></svg></AddPage>
          </PageTabs>
        </Center>

        <Panel $width={261}>
          <PanelHeader><PanelTitle>Visualizações</PanelTitle><Chevron /></PanelHeader>
          <VisualGrid>
            {VISUALS.map(([name, icon]) => <VisualButton key={name} aria-label={name}>{icon}</VisualButton>)}
          </VisualGrid>
          <PaneTabs>
            <PaneTab $active aria-label="Campos"><FieldsTabIcon /></PaneTab>
            <PaneTab aria-label="Formato"><RollerIcon /></PaneTab>
          </PaneTabs>
          <ClippedWell><DropWell>Arrastar os campos de dados para aqui</DropWell></ClippedWell>
          <FilterHeader><PanelTitle>Filtros</PanelTitle></FilterHeader>
          <FilterBody>
            <Caption>Filtros de nível de página</Caption>
            <FilterWell>
              <FilterCard>
                <CardRow $gap={4}>
                  Year
                  <CardActions $end={3}>
                    <svg width="9" height="9" viewBox="0 0 9 9"><path d="M4.500 0V9M0 4.500H9" stroke="#ddd" strokeWidth="2" /></svg>
                    <svg width="9" height="9" viewBox="0 0 9 9"><path d="M0 0L9 9M9 0L0 9" stroke="#bbb" /></svg>
                  </CardActions>
                </CardRow>
                <CardRow>
                  é 2015, 2016 or 2014
                  <CardActions $end={0}>
                    <svg width="13" height="12" viewBox="0 0 13 12"><path d="M.7 7.500L7.500 .700L12.500 5.500L6.500 11.500H3.500zM4 4L9 9" fill="none" stroke="#999" /></svg>
                  </CardActions>
                </CardRow>
                <CardRow><label htmlFor="filter-type">Tipo de Filtro</label></CardRow>
                <SelectWrap>
                  <Select id="filter-type"><option>Filtragem básica</option></Select>
                  <Caret w={7} h={6} fill="#000" />
                </SelectWrap>
                <YearList>
                  {YEARS.map((y) => (
                    <YearRow key={y}>
                      <Check type="checkbox" $size={13} $edge="#6e6e6e" defaultChecked={y >= 2014 && y <= 2016} />
                      {y}
                    </YearRow>
                  ))}
                </YearList>
                <SingleRow><SingleCheck type="checkbox" />Requer seleção única</SingleRow>
              </FilterCard>
            </FilterWell>
            <Caption>Filtros de nível de relatório</Caption>
            <DropWell>Arrastar os campos de dados para aqui</DropWell>
          </FilterBody>
          <ScrollThumb $top={274} $height={425} />
        </Panel>

        <Panel $width={265}>
          <PanelHeader><PanelTitle>Campos</PanelTitle><Chevron /></PanelHeader>
          <SearchArea>
            <SearchBox>
              <Svg s={16}><circle cx="10" cy="6" r="5" fill="none" stroke="#999" /><path d="M6.500 9.500L.5 15.500" stroke="#999" strokeWidth="1.200" /></Svg>
              <SearchInput type="text" aria-label="Procurar" placeholder="Procurar" />
            </SearchBox>
          </SearchArea>
          <FieldScroller>
            <FieldList>
              {FIELDS.map((f) => (
                <FieldRow key={f}>
                  <Check type="checkbox" $size={12} $edge="#ccc" />
                  <FieldGlyph>{f === "Selected period" && <CalcGlyph />}</FieldGlyph>
                  {f}
                </FieldRow>
              ))}
            </FieldList>
            {TABLES.map((t) => (
              <TableRow key={t}>
                <svg width="13" height="8" viewBox="0 0 13 8"><path d="M0 0V8L4 4z" fill="#999" /></svg>
                <TableGlyph />
                <TableName>{t}</TableName>
              </TableRow>
            ))}
          </FieldScroller>
          <ScrollThumb $top={285} $height={360} />
        </Panel>
      </Workspace>

      <StatusBar>PÁGINA 11 DE 11</StatusBar>
    </Shell>
  );
}
